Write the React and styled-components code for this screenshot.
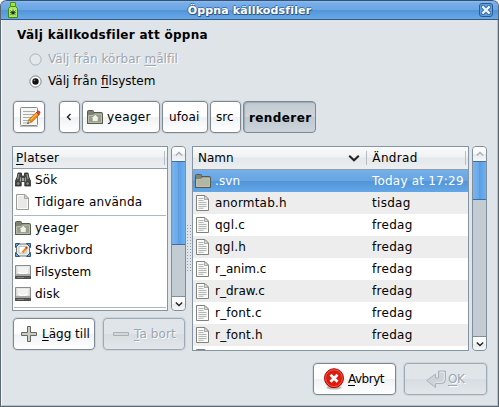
import React from "react";
import styled, { createGlobalStyle, css } from "styled-components";

const Global = createGlobalStyle`
  * { box-sizing: border-box; }
  html, body { margin: 0; padding: 0; background: #fff; overflow: hidden; }
  body { font-family: "DejaVu Sans", sans-serif; font-size: 12px; line-height: 16px; color: #000; }
  svg { display: block; flex: none; }
`;

const Window = styled.div`
  width: 499px;
  height: 407px;
  display: flex;
  flex-direction: column;
  overflow: hidden;
  border: 1px solid #5a6670;
  border-top: 0;
  border-radius: 6px 6px 0 0;
  background: #dfe4e8;
`;

const TitleBar = styled.header`
  height: 20px;
  flex: none;
  display: flex;
  align-items: center;
  padding: 0 5px 0 6px;
  border-top: 1px solid #365273;
  border-bottom: 1px solid #35587f;
  border-radius: 6px 6px 0 0;
  background: linear-gradient(#8fbcf0 0, #78aee9 2px, #6ba5e3 9px, #5294d8 9px, #69a9e8 100%);
`;

const Title = styled.h1`
  flex: 1;
  margin: 0;
  padding: 1px 0 0 1px;
  text-align: center;
  font-size: 11px;
  line-height: 16px;
  color: #fff;
  letter-spacing: 0.15px;
  text-shadow: 1px 1px 0 #2f5a8c, -1px 0 0 #3f70a8, 0 -1px 0 #3f70a8, 0 1px 0 #2f5a8c;
`;

const Body = styled.main`
  flex: 1;
  display: flex;
  flex-direction: column;
  padding: 7px 9px 10px 10px;
  border-left: 1px solid #f6f8f9;
  border-right: 1px solid #b9c1c8;
  border-bottom: 1px solid #b9c1c8;
`;

const Heading = styled.h2`
  margin: 0 0 5px;
  padding-left: 5px;
  height: 16px;
  font-size: 12px;
  line-height: 16px;
  letter-spacing: 0.3px;
`;

const RadioRow = styled.div`
  display: flex;
  align-items: center;
  gap: 6px;
  height: 22px;
  margin-left: 17px;
`;

const disabledText = css`
  color: #9ba7b2;
  text-shadow: 1px 1px 0 #fff;
`;

const Label = styled.span`
  white-space: pre;
  letter-spacing: ${(p) => p.$ls || 0}px;
  font-weight: ${(p) => (p.$bold ? 700 : 400)};
  padding-top: ${(p) => (p.$bold ? 2 : 0)}px;
  u { text-underline-offset: 2px; text-decoration-thickness: 1px; text-decoration-skip-ink: none; }
  ${(p) => p.$disabled && disabledText}
`;

const Button = styled.button`
  display: flex;
  align-items: center;
  justify-content: flex-start;
  gap: ${(p) => p.$gap ?? 5}px;
  width: ${(p) => p.$w}px;
  height: 32px;
  flex: none;
  margin: 0;
  padding: 0 0 0 ${(p) => p.$pad}px;
  font: inherit;
  color: #000;
  border: 1px solid #7c8994;
  border-radius: 4px;
  background: linear-gradient(#fff 0, #fdfdfd 15px, #eff1f3 15px, #fff 100%);
  box-shadow: 0 0 0 1px rgba(150, 162, 172, 0.25);
  ${(p) => p.$pressed && css`
    background: linear-gradient(#c2cad1 0, #ced5db 15px, #bfc8d0 15px, #ccd4da 100%);
    box-shadow: inset 1px 1px 1px #9da8b1;
  `}
  ${(p) => p.$disabled && css`
    border-color: #9eabb7;
    background: linear-gradient(#e0e5e9 0, #e0e5e9 15px, #d7dde2 15px, #e2e6ea 100%);
  `}
`;

const PathBar = styled.nav`
  display: flex;
  gap: 2px;
  margin-top: 9px;
`;

const EditSlot = styled.div`
  margin: 0 12px 0 1px;
`;

const Panes = styled.div`
  display: flex;
  height: 205px;
  margin-top: 13px;
`;

const Places = styled.section`
  width: 175px;
  flex: none;
`;

const ListWithScroll = styled.div`
  display: flex;
  height: ${(p) => p.$h}px;
  gap: 3px;
`;

const List = styled.div`
  flex: none;
  width: ${(p) => p.$w}px;
  height: 100%;
  overflow: hidden;
  border: 1px solid #8695a3;
  background: #fff;
`;

const ListHeader = styled.div`
  display: flex;
  align-items: center;
  height: ${(p) => p.$h}px;
  padding-right: 2px;
  border-bottom: 1px solid #929da7;
  background: linear-gradient(#fafbfb 0, #eff1f3 10px, #e5e8eb 11px, #eceff1 100%);
`;

const HeaderCell = styled.div`
  display: flex;
  align-items: center;
  justify-content: space-between;
  width: ${(p) => p.$w}px;
  height: 14px;
  padding: 0 6px 0 ${(p) => p.$pad}px;
  border-right: 1px solid #b4bcc4;
`;

const PlaceRow = styled.div`
  display: flex;
  align-items: center;
  gap: 4px;
  height: 22px;
  padding-left: 2px;
`;

const Divider = styled.hr`
  height: 1px;
  margin: 2px 1px 1px;
  border: 0;
  background: #acb8c3;
`;

const FileRow = styled.div`
  display: grid;
  grid-template-columns: 20px 157px 1fr;
  align-items: center;
  height: 22px;
  padding-left: 2px;
  background: ${(p) => (p.$odd ? "#ededed" : "#fff")};
  ${(p) => p.$selected && css`
    color: #fff;
    background: linear-gradient(#74b0ea 0, #66a3e1 11px, #5295d7 11px, #64a7e7 100%);
  `}
`;

const Track = styled.div`
  display: flex;
  flex-direction: column;
  width: 15px;
  height: 100%;
  flex: none;
  overflow: hidden;
  border: 1px solid #7f8e9b;
  border-radius: 4px;
  background: #c3cbd3;
`;

const ArrowBox = styled.div`
  display: flex;
  align-items: center;
  justify-content: center;
  height: 14px;
  flex: none;
  background: linear-gradient(#fff 0, #f8f9fa 50%, #e7eaed 50%, #f5f6f7 100%);
  border-top: ${(p) => (p.$bottom ? "1px solid #7f8e9b" : "0")};
`;

const Thumb = styled.div`
  height: ${(p) => p.$h}px;
  flex: none;
  border: solid #3e6ea5;
  border-width: 1px 0;
  background: linear-gradient(90deg, #7ab4ef 0, #6aa8e7 6px, #599ce0 6px, #6eb0f0 100%);
`;

const Spacer = styled.div`
  flex: 1;
`;

const Splitter = styled.div`
  display: flex;
  align-items: center;
  width: 5px;
  height: 205px;
  flex: none;
`;

const Actions = styled.div`
  display: flex;
  gap: 8px;
  margin: 7px 0 0 1px;
`;

const Footer = styled.footer`
  display: flex;
  justify-content: flex-end;
  gap: 8px;
  margin-top: 12px;
  padding-right: 1px;
`;

const Bottle = () => (
  <svg width="12" height="17" viewBox="0 0 12 17">
    <path d="M3.5 .5h5v4h-5z" fill="#a5df4a" stroke="#4d9a0b" />
    <path d="M3.5 4.5h5l2 2v9h-9v-9z" fill="#a5ea58" stroke="#3c8a0b" />
    <path d="M3 7h6v7h-6z" fill="#b9f07a" />
    <path d="M6 7.5v6M3.3 8.500l5.400 4.500M8.700 8.500l-5.400 4.500M3 10.700h6" stroke="#1b3410" strokeWidth=".8" />
    <circle cx="6" cy="10.700" r="1.300" fill="#17260f" />
  </svg>
);

const CloseIcon = () => (
  <svg width="14" height="14" viewBox="0 0 14 14">
    <rect x=".5" y=".5" width="13" height="13" rx="2.5" fill="#5f9fdf" stroke="#2b5a90" />
    <path d="M4 4l6 6M10 4l-6 6" stroke="#2f5f96" strokeWidth="4" strokeLinecap="round" />
    <path d="M3.3 3.3l7.4 7.4M10.7 3.3l-7.4 7.4" stroke="#e8f2fc" strokeWidth="2.4" />
  </svg>
);

const Radio = ({ on, disabled }) => (
  <svg width="13" height="13" viewBox="0 0 13 13">
    <circle cx="6.5" cy="6.5" r="5.6" fill={disabled ? "#e4e8eb" : "#fff"} stroke={disabled ? "#a6b1bb" : "#75818c"} strokeWidth="1" />
    {on && <circle cx="6.5" cy="6.5" r="3.2" fill="#111" />}
    {on && <circle cx="5.5" cy="5.3" r=".9" fill="#777" />}
  </svg>
);

const EditIcon = () => (
  <svg width="22" height="22" viewBox="0 0 22 22">
    <path d="M1 20.5h18" stroke="#bbb" />
    <rect x="1.5" y="1.5" width="17" height="18" rx="1" fill="#f6f6f5" stroke="#888a85" />
    <path d="M4 5.5h12M4 8.5h12M4 11.5h9M4 14.5h6M4 17h6" stroke="#aaaca8" />
    <path d="M8.5 17.5l1.5-4 2.6 2.6z" fill="#efd9a8" stroke="#8a6a20" strokeWidth=".7" />
    <path d="M10 13.5L18 6l2.5 2.5-7.9 7.6z" fill="#f88b10" stroke="#b85c00" strokeWidth=".8" />
    <path d="M11.5 13.7l7-6.6" stroke="#ffd27a" strokeWidth=".9" />
    <path d="M17.5 6.5l1.5-1.4q.7-.5 1.6.3t.3 1.7l-1.2 1.3z" fill="#e04545" stroke="#a02020" strokeWidth=".6" />
    <path d="M8.4 17.8l.6-1.5 .9.9z" fill="#222" />
  </svg>
);

const Folder = ({ home }) => (
  <svg width="16" height="16" viewBox="0 0 16 16">
    <path d="M.5 14.5v-12q0-1 1-1h4q1 0 1 1v1h8q1 0 1 1v10z" fill="#7f8373" stroke="#555b4d" />
    <path d="M1.5 6.5h4.5l1.5-1.5h7v8.5h-13z" fill={home ? "#9a9e8d" : "#b3b6a2"} stroke="#c6cab8" strokeWidth=".8" />
    {home && <path d="M8.2 5.4l4.3 4.1h-1.4v3h-5.8v-3h-1.4z" fill="#f0f1ea" stroke="#858a76" strokeWidth=".6" />}
    <path d="M.5 14.5h15" stroke="#555b4d" />
  </svg>
);

const Binoculars = () => (
  <svg width="16" height="16" viewBox="0 0 16 16">
    <path d="M3 1h3.5v3h3v-3h3.5l.8 4 2 4.500v4.500h-6v-4.500h-3.600v4.500h-6v-4.500l2-4.500z" fill="#4a4d49" stroke="#252725" strokeWidth=".8" />
    <path d="M3.800 2l-1 5M12 2l1 5M5.500 5.500v4M10.500 5.500v4" stroke="#9da09a" strokeWidth="1.100" />
    <circle cx="3.200" cy="11.600" r="1.900" fill="#858882" stroke="#222" strokeWidth=".7" />
    <circle cx="12.600" cy="11.600" r="1.900" fill="#858882" stroke="#222" strokeWidth=".7" />
    <path d="M7 6h2v3h-2z" fill="#a8aaa5" />
  </svg>
);

const Doc = ({ lines }) => (
  <svg width="16" height="16" viewBox="0 0 16 16">
    <path d="M1.5.5h8.500l3.500 3.500v11.500h-12z" fill={lines ? "#f7f7f6" : "#e9e9e8"} stroke={lines ? "#7f817d" : "#9a9c98"} />
    <path d="M2.500 1.500h7l3 3v10h-10z" fill="none" stroke="#fff" strokeWidth=".8" />
    <path d="M9.500.800v3.700h3.800z" fill="#dcdcda" stroke="#999b96" strokeWidth=".8" />
    {lines && <path d="M3.500 3.500h5M3.500 5.500h5M3.500 7.500h8M3.500 9.500h8M3.500 11.500h8M3.500 13.300h5" stroke="#b4b6b1" />}
  </svg>
);

const Desktop = () => (
  <svg width="16" height="16" viewBox="0 0 16 16">
    <rect x="1.5" y="2" width="13" height="12" fill="#e9ebe5" stroke="#747870" />
    <path d="M4 4.5h7v6.5h-7z" fill="#fff" stroke="#a9aca5" strokeWidth=".7" />
    <path d="M7.5 10.5l4.300-5" stroke="#e88616" strokeWidth="2" />
    <path d="M11 6.300l1.100-1.300" stroke="#c33" strokeWidth="2" />
    <path d="M.5 1.500h4l-4 4zM15.500 1.500v4l-4-4zM.5 14.500v-4l4 4zM15.500 14.500h-4l4-4z" fill="#719fd2" stroke="#27548d" />
  </svg>
);

const Drive = () => (
  <svg width="16" height="16" viewBox="0 0 16 16">
    <path d="M.5 1.5h15v13h-15z" fill="#dcdddb" stroke="#8b8d88" />
    <path d="M2 2.500h12l-1 6q-5 3-10 0z" fill="#f2f2f1" />
    <path d="M3 8q5 3.500 10 0" fill="none" stroke="#fff" strokeWidth="1.200" />
    <path d="M1 10h14v2h-14z" fill="#a6a8a4" />
    <path d="M.5 12.500h15v2h-15z" fill="#5d5f5b" stroke="#4a4c49" />
    <path d="M2 13.500h7" stroke="#858783" />
  </svg>
);

const Plus = () => (
  <svg width="16" height="16" viewBox="0 0 16 16">
    <path d="M6.5.5h3v6h6v3h-6v6h-3v-6h-6v-3h6z" fill="#c9ccc5" stroke="#656762" />
  </svg>
);

const Minus = () => (
  <svg width="16" height="16" viewBox="0 0 16 16">
    <path d="M.5 6.5h15v3h-15z" fill="#d3d8db" stroke="#a9b0b5" />
  </svg>
);

const Cancel = () => (
  <svg width="20" height="22" viewBox="0 0 20 22">
    <ellipse cx="10" cy="19.5" rx="7.5" ry="2" fill="#bbb" />
    <circle cx="10" cy="10.2" r="9.5" fill="#df1b10" stroke="#a80d08" />
    <circle cx="10" cy="10.2" r="8.4" fill="none" stroke="#f4664f" strokeWidth=".8" />
    <path d="M6.5 6.7l7 7M13.5 6.7l-7 7" stroke="#fff" strokeWidth="2.7" />
  </svg>
);

const Enter = () => (
  <svg width="20" height="19" viewBox="0 0 20 19">
    <path d="M12.5 1h7v8.500q0 4-4 4h-6v4l-8.800-7 8.800-6.500v4h3z" fill="#cdd3d8" stroke="#a9b2b9" />
    <path d="M13.800 2.300h4.400v7q0 3-3 3h-6.500" fill="none" stroke="#e5e9ec" />
  </svg>
);

const chevrons = {
  down: "M.8 2.5l3.2 3 3.2-3",
  up: "M.8 5.5l3.2-3 3.2 3",
  left: "M5.5 1l-3 3 3 3",
};

const Chevron = ({ dir = "down", light, size = 7 }) => (
  <svg width={size} height={size} viewBox="0 0 8 8">
    <path d={chevrons[dir]} fill="none" stroke={light ? "#a5afb8" : "#222"} strokeWidth="1.4" />
  </svg>
);

const Grip = () => (
  <svg width="5" height="48" viewBox="0 0 5 48">
    {Array.from({ length: 16 }, (_, i) => (
      <path key={i} d={`M0 ${i * 3 + 0.5}h1M3 ${i * 3 + 0.5}h1`} stroke="#929da7" />
    ))}
  </svg>
);

const Scrollbar = ({ thumb }) => (
  <Track>
    <ArrowBox><Chevron dir="up" light size={8} /></ArrowBox>
    <Thumb $h={thumb} />
    <Spacer />
    <ArrowBox $bottom><Chevron size={8} /></ArrowBox>
  </Track>
);

const files = [
  ["anormtab.h", "tisdag", 0.2],
  ["qgl.c", "fredag", 0.2],
  ["qgl.h", "fredag", 0.2],
  ["r_anim.c", "fredag", 0],
  ["r_draw.c", "fredag", 0],
  ["r_font.c", "fredag", 0.2],
  ["r_font.h", "fredag", 0.2],
];

export default function App() {
  return (
    <>
      <Global />
      <Window>
        <TitleBar>
          <Bottle />
          <Title>Öppna källkodsfiler</Title>
          <CloseIcon />
        </TitleBar>
        <Body>
          <Heading>Välj källkodsfiler att öppna</Heading>
          <RadioRow><Radio disabled /><Label $disabled $ls={0.05}>Välj från körbar <u>m</u>ålfil</Label></RadioRow>
          <RadioRow><Radio on /><Label>Välj från <u>f</u>ilsystem</Label></RadioRow>
          <PathBar>
            <EditSlot><Button $w={32} $pad={5}><EditIcon /></Button></EditSlot>
            <Button $w={21} $pad={5}><Chevron dir="left" size={8} /></Button>
            <Button $w={78} $pad={4} $gap={4}><Folder home /><Label $ls={0.35}>yeager</Label></Button>
            <Button $w={46} $pad={6}><Label $ls={0.1}>ufoai</Label></Button>
            <Button $w={31} $pad={5}><Label>src</Label></Button>
            <Button $w={73} $pad={5} $pressed><Label $bold $ls={0.4}>renderer</Label></Button>
          </PathBar>
          <Panes>
            <Places>
              <ListWithScroll $h={165}>
                <List $w={156}>
                  <ListHeader $h={22}>
                    <HeaderCell $w={153} $pad={3}><Label $ls={0.3}><u>P</u>latser</Label></HeaderCell>
                  </ListHeader>
                  <PlaceRow><Binoculars /><Label $ls={0.2}>Sök</Label></PlaceRow>
                  <PlaceRow><Doc /><Label $ls={0.2}>Tidigare använda</Label></PlaceRow>
                  <Divider />
                  <PlaceRow><Folder home /><Label $ls={0.35}>yeager</Label></PlaceRow>
                  <PlaceRow><Desktop /><Label $ls={0.05}>Skrivbord</Label></PlaceRow>
                  <PlaceRow><Drive /><Label>Filsystem</Label></PlaceRow>
                  <PlaceRow><Drive /><Label $ls={0.2}>disk</Label></PlaceRow>
                  <Divider />
                </List>
                <Scrollbar thumb={84} />
              </ListWithScroll>
              <Actions>
                <Button $w={82} $pad={7}><Plus /><Label><u>L</u>ägg till</Label></Button>
                <Button $w={82} $pad={9} $disabled><Minus /><Label $disabled $ls={0.1}><u>T</u>a bort</Label></Button>
              </Actions>
            </Places>
            <Splitter><Grip /></Splitter>
            <ListWithScroll $h={205}>
              <List $w={277}>
                <ListHeader $h={23}>
                  <HeaderCell $w={175} $pad={5}><Label>Namn</Label><Chevron size={12} /></HeaderCell>
                  <HeaderCell $w={99} $pad={5}><Label $ls={0.35}>Ändrad</Label></HeaderCell>
                </ListHeader>
                <FileRow $selected><Folder /><Label $ls={0.1}>.svn</Label><Label $ls={0.2}>Today at 17:29</Label></FileRow>
                {files.map(([name, day, spacing], i) => (
                  <FileRow key={name} $odd={i % 2 === 0}>
                    <Doc lines />
                    <Label $ls={spacing}>{name}</Label>
                    <Label $ls={0.3}>{day}</Label>
                  </FileRow>
                ))}
                <FileRow><Doc lines /></FileRow>
              </List>
              <Scrollbar thumb={39} />
            </ListWithScroll>
          </Panes>
          <Footer>
            <Button $w={83} $pad={10} $gap={4}><Cancel /><Label $ls={-0.5}><u>A</u>vbryt</Label></Button>
            <Button $w={83} $pad={21} $gap={2} $disabled><Enter /><Label $disabled $ls={-0.4}><u>O</u>K</Label></Button>
          </Footer>
        </Body>
      </Window>
    </>
  );
}
